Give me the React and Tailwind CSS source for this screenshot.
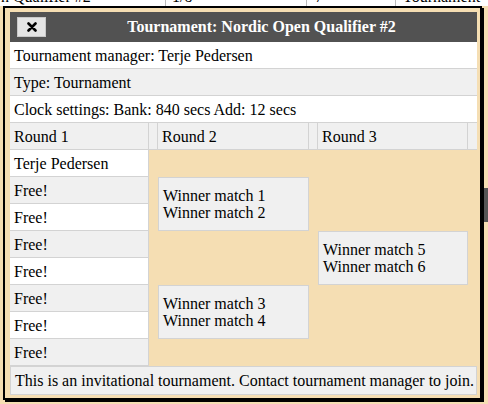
import React from 'react';

const players = ['Terje Pedersen', 'Free!', 'Free!', 'Free!', 'Free!', 'Free!', 'Free!', 'Free!'];

const CloseIcon = () => (
  <svg width="10" height="10" viewBox="0 0 10 10">
    <path d="M1.5 1.5 L8.5 8.5 M8.5 1.5 L1.5 8.5" stroke="#000" strokeWidth="2.6" strokeLinecap="round" />
  </svg>
);

const MatchBox = ({ lines, className }) => (
  <div className={`flex flex-col justify-center bg-[#f0f0f0] border border-[#d3d3d3] px-[4px] leading-[17px] ${className}`}>
    {lines.map((l) => (
      <div key={l}>{l}</div>
    ))}
  </div>
);

export default function App() {
  return (
    <div className="relative w-[488px] h-[404px] overflow-hidden bg-[#f5deb3] font-['Liberation_Serif',serif] text-[16px] text-black">
      {/* page behind the dialog */}
      <div className="absolute left-0 top-[-12px] w-[488px] h-[18px] bg-white flex leading-[18px]">
        <div className="w-[166px] border-r border-[#bbb] pl-[1px] whitespace-nowrap overflow-hidden">n Qualifier #2</div>
        <div className="w-[141px] border-r border-[#bbb] pl-[6px]">1/8</div>
        <div className="w-[89px] border-r border-[#bbb] pl-[8px]">7</div>
        <div className="flex-1 pl-[7px]">Tournament</div>
      </div>
      <div className="absolute left-[484px] top-[188px] w-[4px] h-[34px] bg-[#555]" />

      {/* dialog */}
      <div className="absolute left-[3px] top-[6px] w-[479px] border-2 border-black shadow-[2px_2px_0_#000] bg-[#f5deb3] pl-[5px] pr-[3px] pt-[4px] pb-[3px]">
        <div className="flex items-center h-[30px] bg-[#525252] pl-[7px]">
          <button className="flex items-center justify-center w-[29px] h-[20px] bg-[#e4e4e4] border border-[#c8c8c8]">
            <CloseIcon />
          </button>
          <div className="flex-1 text-center text-white font-bold">Tournament: Nordic Open Qualifier #2</div>
        </div>

        <div className="bg-white border-b border-[#d3d3d3] h-[27px] px-[4px] pt-[5px] leading-[18px]">Tournament manager: Terje Pedersen</div>
        <div className="bg-[#f0f0f0] border-b border-[#d3d3d3] h-[27px] px-[4px] pt-[5px] leading-[18px]">Type: Tournament</div>
        <div className="bg-white border-b border-[#d3d3d3] h-[27px] px-[4px] pt-[5px] leading-[18px]">Clock settings: Bank: 840 secs Add: 12 secs</div>

        <div className="grid grid-cols-[139px_9px_151px_9px_150px_9px] bg-[#f0f0f0] border-b border-[#d3d3d3] h-[27px] leading-[18px]">
          <div className="border-r border-[#d3d3d3] px-[4px] pt-[5px]">Round 1</div>
          <div className="border-r border-[#d3d3d3]" />
          <div className="border-r border-[#d3d3d3] px-[4px] pt-[5px]">Round 2</div>
          <div className="border-r border-[#d3d3d3]" />
          <div className="border-r border-[#d3d3d3] px-[4px] pt-[5px]">Round 3</div>
          <div />
        </div>

        <div className="grid grid-cols-[139px_9px_151px_9px_150px_9px] grid-rows-[repeat(8,27px)]">
          {players.map((p, i) => (
            <div
              key={i}
              style={{ gridRow: i + 1 }}
              className={`col-start-1 border-r border-b border-[#d3d3d3] px-[4px] pt-[5px] leading-[18px] ${i % 2 === 0 ? 'bg-white' : 'bg-[#f0f0f0]'}`}
            >
              {p}
            </div>
          ))}
          <MatchBox lines={['Winner match 1', 'Winner match 2']} className="col-start-3 row-start-2 row-span-2" />
          <MatchBox lines={['Winner match 3', 'Winner match 4']} className="col-start-3 row-start-6 row-span-2" />
          <MatchBox lines={['Winner match 5', 'Winner match 6']} className="col-start-5 row-start-4 row-span-2" />
        </div>

        <div className="bg-[#f0f0f0] border border-[#d3d3d3] h-[29px] px-[4px] pt-[5px] leading-[18px] whitespace-nowrap">
          This is an invitational tournament. Contact tournament manager to join.
        </div>
      </div>
    </div>
  );
}
